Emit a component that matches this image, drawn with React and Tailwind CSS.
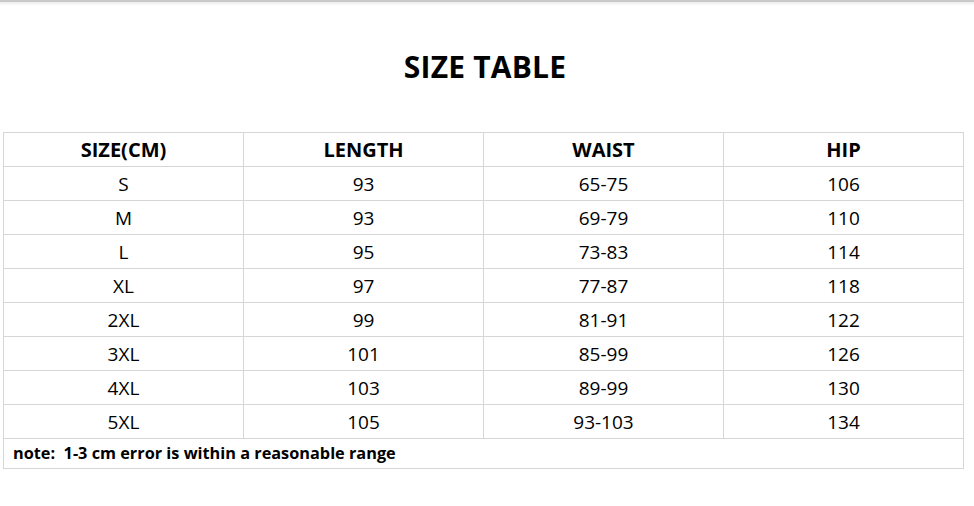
const headers = ['SIZE(CM)', 'LENGTH', 'WAIST', 'HIP'];

const rows = [
  ['S', '93', '65-75', '106'],
  ['M', '93', '69-79', '110'],
  ['L', '95', '73-83', '114'],
  ['XL', '97', '77-87', '118'],
  ['2XL', '99', '81-91', '122'],
  ['3XL', '101', '85-99', '126'],
  ['4XL', '103', '89-99', '130'],
  ['5XL', '105', '93-103', '134'],
];

export default function App() {
  return (
    <div className="w-[974px] h-[506px] bg-white text-black font-['Open_Sans','Noto_Sans',sans-serif] overflow-hidden">
      {/* top shadow strip */}
      <div className="h-[2px] bg-[#c8c8c8]" />
      <div className="h-[4px] bg-gradient-to-b from-[#ececec] to-white" />

      <h1 className="mt-[41px] text-center text-[30px] leading-[40px] font-bold tracking-[0.2px] pr-[4px]">SIZE TABLE</h1>

      <table className="mt-[45px] ml-[3px] w-[961px] border-collapse table-fixed text-[19px]">
        <thead>
          <tr className="h-[34px]">
            {headers.map(h => (
              <th key={h} className="w-[240px] border border-[#d6d6d6] font-bold text-[20px] text-center p-0 leading-[33px]">{h}</th>
            ))}
          </tr>
        </thead>
        <tbody>
          {rows.map(r => (
            <tr key={r[0]} className="h-[34px]">
              {r.map((c, i) => (
                <td key={i} className="border border-[#d6d6d6] text-center p-0 pt-[1px] leading-[32px]">{c}</td>
              ))}
            </tr>
          ))}
          <tr className="h-[30px]">
            <td colSpan={4} className="border border-[#d6d6d6] px-[9px] py-0 text-[16.3px] font-bold leading-[29px]">
              note:&nbsp; 1-3 cm error is within a reasonable range
            </td>
          </tr>
        </tbody>
      </table>
    </div>
  );
}
